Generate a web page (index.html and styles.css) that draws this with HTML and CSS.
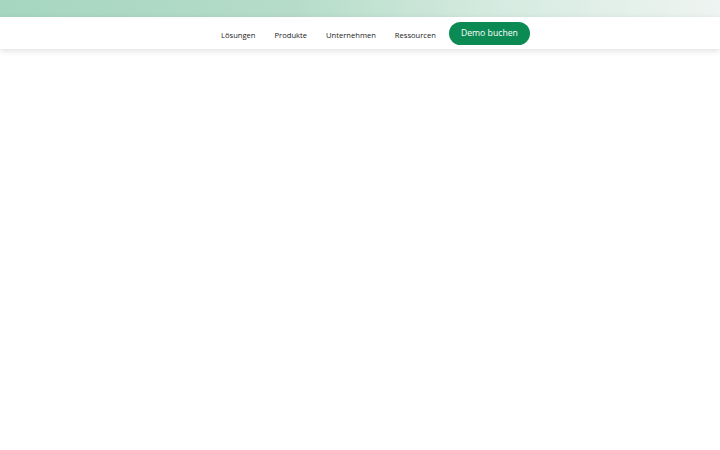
FILE: index.html
```html
<!DOCTYPE html>
<html lang="de">
<head>
	<meta charset="UTF-8">
	<title>Demo buchen</title>
	<link rel="stylesheet" href="styles.css">
</head>
<body>
	<div class="topband"></div>
	<header class="site-header">
		<nav class="main-nav">
			<a href="#" class="nav-link">Lösungen</a>
			<a href="#" class="nav-link">Produkte</a>
			<a href="#" class="nav-link">Unternehmen</a>
			<a href="#" class="nav-link">Ressourcen</a>
			<a href="#" class="btn-demo">Demo buchen</a>
		</nav>
	</header>
	<main class="content"></main>
</body>
</html>
```

FILE: styles.css
```css
html, body{
	margin: 0;
	padding: 0;
	background: #fff;
	font-family: "Open Sans", "DejaVu Sans", sans-serif;
}

.topband{
	height: 17px;
	background: linear-gradient(90deg, #a6d6bf 0%, #b5dcc8 40%, #d6ebe1 70%, #eef4f1 100%);
}

.site-header{
	position: relative;
	height: 32px;
	background: #fff;
	box-shadow: 0 2px 6px rgba(0,0,0,0.12);
	display: flex;
	align-items: center;
}

.main-nav{
	display: flex;
	align-items: center;
	gap: 19px;
	margin-left: 221px;
	margin-top: 2px;
}

.nav-link{
	padding-top: 2px;
	font-size: 7.6px;
	font-weight: 500;
	color: #1a1a1a;
	text-decoration: none;
}

.btn-demo{
	display: flex;
	align-items: center;
	justify-content: center;
	width: 81px;
	height: 23px;
	margin-left: -6px;
	margin-top: -2px;
	border-radius: 12px;
	background: #0b8a53;
	color: #fff;
	font-size: 8.7px;
	text-decoration: none;
}

.content{
	height: 400px;
}
```
